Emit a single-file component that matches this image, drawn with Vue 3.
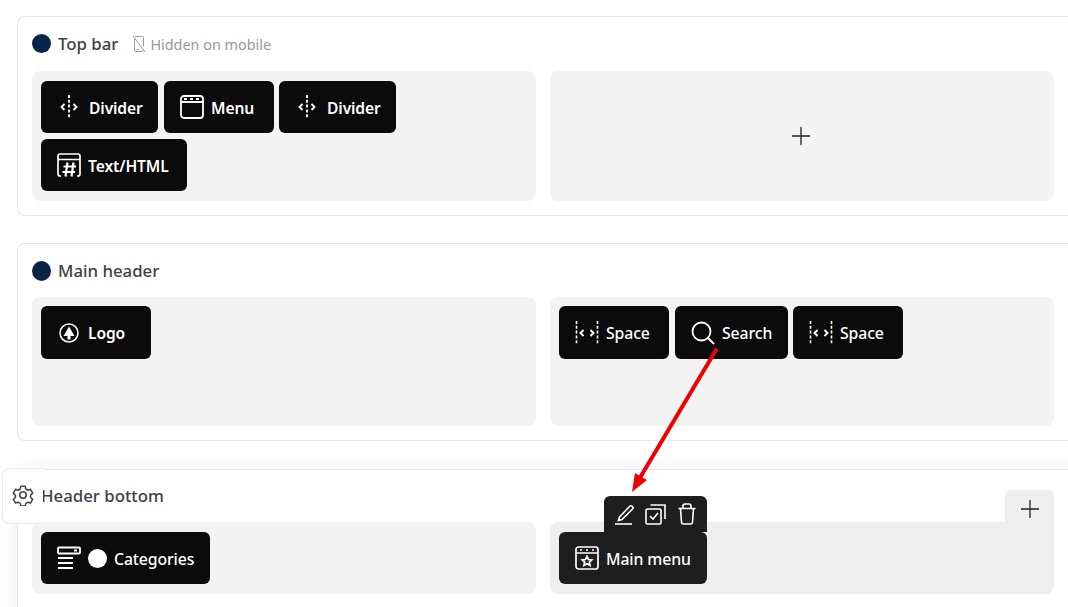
<script setup>
</script>

<template>
  <div class="page">
    <section class="card card-top">
      <header class="head">
        <span class="dot"></span>
        <span class="title">Top bar</span>
        <span class="hidden-note">
          <svg width="14" height="18" viewBox="0 0 14 18" fill="none" stroke="#999" stroke-width="1"><path d="M2.500 4v11.500a1 1 0 0 0 1 1h7a1 1 0 0 0 1-1V14M3 1.500h7.500a1 1 0 0 1 1 1V11M1 1l12 16M5 14.500h2"/></svg>
          Hidden on mobile
        </span>
      </header>
      <div class="zones">
        <div class="zone">
          <div class="widget strong w-divider">
            <svg width="20" height="24" viewBox="0 0 20 24" fill="none" stroke="#fff" stroke-width="1.800"><path d="M10 0v24" stroke-dasharray="3 1.800"/><path d="M5.500 9L2.500 12l3 3M14.500 9l3 3-3 3"/></svg>
            <span>Divider</span>
          </div>
          <div class="widget strong w-menu">
            <svg width="24" height="24" viewBox="0 0 24 24" fill="none" stroke="#fff" stroke-width="1.800"><rect x="1" y="1" width="22" height="22" rx="3"/><path d="M1 7h22M4 4h3M10 4h3M16 4h3"/></svg>
            <span>Menu</span>
          </div>
          <div class="widget strong w-divider tight">
            <svg width="20" height="24" viewBox="0 0 20 24" fill="none" stroke="#fff" stroke-width="1.800"><path d="M10 0v24" stroke-dasharray="3 1.800"/><path d="M5.500 9L2.500 12l3 3M14.500 9l3 3-3 3"/></svg>
            <span>Divider</span>
          </div>
          <div class="widget strong w-text">
            <svg width="24" height="24" viewBox="0 0 24 24" fill="none" stroke="#fff" stroke-width="1.700"><path d="M4 23H3a2 2 0 0 1-2-2V3a2 2 0 0 1 2-2h18a2 2 0 0 1 2 2v18a2 2 0 0 1-2 2h-1M1 6.500h22"/><path d="M10.500 9.500l-2 14M16.500 9.500l-2 14M6.500 13.500h12.500M5.500 19h12.500" stroke-width="2.200"/></svg>
            <span>Text/HTML</span>
          </div>
        </div>
        <div class="zone zone-center">
          <svg width="20" height="20" viewBox="0 0 20 20" stroke="#222" stroke-width="1.300"><path d="M10 1v18M1 10h18"/></svg>
        </div>
        <div class="zone"></div>
      </div>
    </section>

    <section class="card card-main">
      <header class="head">
        <span class="dot dot-main"></span>
        <span class="title title-main">Main header</span>
      </header>
      <div class="zones">
        <div class="zone">
          <div class="widget strong w-logo">
            <svg width="20" height="20" viewBox="0 0 20 20"><circle cx="10" cy="10" r="9" fill="none" stroke="#fff" stroke-width="1.500"/><path d="M10 3.500l5.500 9.500h-4v3.500h-3V13h-4z" fill="#fff"/></svg>
            <span>Logo</span>
          </div>
        </div>
        <div class="zone">
          <div class="widget w-space">
            <svg width="24" height="24" viewBox="0 0 24 24" fill="none" stroke="#fff" stroke-width="1.600"><path d="M1.500 0v24M22.500 0v24" stroke-dasharray="3 1.800"/><path d="M8.500 9L5.500 12l3 3M15.500 9l3 3-3 3" stroke-width="1.900"/></svg>
            <span>Space</span>
          </div>
          <div class="widget w-search">
            <svg width="24" height="24" viewBox="0 0 24 24" fill="none" stroke="#fff" stroke-width="1.800"><circle cx="10.500" cy="10.500" r="9"/><path d="M17 17l6 6"/></svg>
            <span>Search</span>
          </div>
          <div class="widget w-space tight">
            <svg width="24" height="24" viewBox="0 0 24 24" fill="none" stroke="#fff" stroke-width="1.600"><path d="M1.500 0v24M22.500 0v24" stroke-dasharray="3 1.800"/><path d="M8.500 9L5.500 12l3 3M15.500 9l3 3-3 3" stroke-width="1.900"/></svg>
            <span>Space</span>
          </div>
        </div>
        <div class="zone"></div>
      </div>
    </section>

    <section class="card card-bottom">
      <div class="gear-tab">
        <svg width="22" height="22" viewBox="0 0 24 24" fill="none" stroke="#444" stroke-width="1.700" stroke-linejoin="round"><path d="M9.600 2.500h4.800l.6 3 2.300 1.300 2.900-1 2.400 4.200-2.300 2v2.600l2.300 2-2.400 4.200-2.900-1-2.300 1.300-.6 3H9.600l-.6-3-2.300-1.300-2.900 1-2.400-4.200 2.300-2v-2.600l-2.300-2 2.400-4.200 2.900 1L9 5.500z"/><circle cx="12" cy="12" r="3.500"/></svg>
      </div>
      <header class="head">
        <span class="title title-bottom">Header bottom</span>
      </header>
      <div class="zones">
        <div class="zone">
          <div class="widget w-cat">
            <svg width="24" height="24" viewBox="0 0 24 24" fill="none" stroke="#fff" stroke-width="1.800"><rect x="1" y="1.500" width="22" height="6" rx="1"/><path d="M17 4.500h3M1 12h15M1 17h15M1 22h15"/></svg>
            <span class="white-dot"></span>
            <span>Categories</span>
          </div>
        </div>
        <div class="zone zone-active">
          <div class="add-tab">
            <svg width="18" height="18" viewBox="0 0 18 18" stroke="#222" stroke-width="1.300"><path d="M9 0v18M0 9h18"/></svg>
          </div>
          <div class="widget w-mainmenu">
            <div class="toolbar">
              <svg width="22" height="22" viewBox="0 0 22 22" fill="none" stroke="#fff" stroke-width="1.600"><path d="M5.500 14L15.500 3.500a1.800 1.800 0 0 1 3 2.500L8 16.500l-3.500 1z"/><path d="M1 21h17"/></svg>
              <svg width="22" height="22" viewBox="0 0 22 22" fill="none" stroke="#fff" stroke-width="1.600"><rect x="1" y="6" width="15" height="15" rx="1.500"/><path d="M5.500 2H20v14M5 13l3 3 5-6"/></svg>
              <svg width="22" height="22" viewBox="-1 0 22 22" fill="none" stroke="#fff" stroke-width="1.600"><path d="M1.500 5.500h17M6 5V3a2 2 0 0 1 2-2h4a2 2 0 0 1 2 2v2M3.500 6l1 13a2 2 0 0 0 2 2h7a2 2 0 0 0 2-2l1-13"/></svg>
            </div>
            <svg width="24" height="24" viewBox="0 0 24 24" fill="none" stroke="#fff" stroke-width="1.700"><rect x="1" y="1" width="22" height="22" rx="2.500"/><path d="M1 7h22M5 4h2M11 4h2M17 4h2"/><path d="M12 10.500l1.500 3 3.300.4-2.400 2.200.6 3.200-3-1.600-3 1.600.6-3.200-2.400-2.200 3.300-.4z" stroke-width="1.700"/></svg>
            <span>Main menu</span>
          </div>
        </div>
        <div class="zone"></div>
      </div>
    </section>

    <svg class="arrow" width="1068" height="607" viewBox="0 0 1068 607">
      <path d="M716 350L641 476" stroke="#f00000" stroke-width="4" stroke-linecap="round" fill="none"/>
      <path d="M632 492L635 473L647 480z" fill="#f00000"/>
    </svg>
  </div>
</template>

<style>
html, body { margin: 0; background: #fff; overflow: hidden; }
</style>

<style scoped>
.page {
  position: relative;
  width: 1068px;
  height: 607px;
  overflow: hidden;
  background: #fff;
  font-family: "Noto Sans", sans-serif;
  box-sizing: border-box;
  padding: 16px 0 0 17px;
}
.card {
  box-sizing: border-box;
  width: 1100px;
  border: 1px solid #e6e6e6;
  border-right: 0;
  border-radius: 8px 0 0 8px;
  padding: 0 0 14px 14px;
  background: #fff;
}
.card-top { height: 200px; }
.card-main { height: 198px; margin-top: 27px; }
.card-bottom {
  position: relative;
  height: 160px;
  margin-top: 28px;
  box-shadow: 0 0 20px rgba(0, 0, 0, 0.07);
}
.head {
  display: flex;
  align-items: center;
  height: 54px;
}
.card-main .head { height: 53px; }
.card-bottom .head { height: 52px; }
.dot {
  width: 19px;
  height: 19px;
  border-radius: 50%;
  background: #0a2348;
  margin-right: 7px;
  margin-top: -2px;
}
.dot-main { height: 20px; margin-top: 0; }
.title {
  font-size: 16.800px;
  font-weight: 500;
  color: #3f4047;
  line-height: 1;
}
.title-main { margin-top: 2px; }
.title-bottom { margin-left: 9px; margin-top: 1px; }
.hidden-note {
  display: flex;
  align-items: center;
  gap: 4px;
  margin-left: 14px;
  font-size: 14.400px;
  color: #999;
}
.zones {
  display: flex;
  gap: 14px;
}
.zone {
  position: relative;
  box-sizing: border-box;
  flex: 0 0 504px;
  display: flex;
  flex-wrap: wrap;
  align-content: flex-start;
  gap: 6px;
  padding: 10px 9px;
  background: #f3f3f3;
  border-radius: 8px;
}
.card-top .zone { height: 130px; }
.card-main .zone { height: 129px; padding-top: 9px; }
.card-bottom .zone { height: 72px; }
.zone-center {
  align-items: center;
  align-content: center;
  justify-content: center;
  padding-right: 11px;
}
.zone-active {
  background: #eeeeee;
  border-top-right-radius: 0;
}
.widget {
  position: relative;
  box-sizing: border-box;
  display: flex;
  align-items: center;
  height: 52px;
  padding-left: 16px;
  background: #0b0b0b;
  border-radius: 6px;
  color: #fff;
  font-size: 15.800px;
  font-weight: 500;
  letter-spacing: -0.1px;
  white-space: nowrap;
}
.widget > span { padding-top: 1px; }
.strong { font-weight: 600; font-size: 15.600px; }
.card-main .widget { height: 53px; }
.card-main .widget > span { padding-top: 0; }
.w-divider { width: 117px; gap: 10px; padding-left: 18px; }
.w-menu { width: 110px; gap: 7px; }
.w-text { width: 146px; gap: 7px; }
.w-logo { width: 110px; gap: 9px; padding-left: 18px; }
.w-space { width: 110px; gap: 7px; }
.w-search { width: 113px; gap: 7px; }
.w-cat { width: 169px; gap: 7px; }
.w-mainmenu { width: 148px; gap: 7px; background: #1e1e1e; }
.tight { margin-left: -1px; }
.widget > .white-dot {
  width: 19px;
  height: 19px;
  padding-top: 0;
  border-radius: 50%;
  background: #fff;
}
.toolbar {
  position: absolute;
  right: 0;
  bottom: 52px;
  box-sizing: border-box;
  width: 103px;
  height: 36px;
  display: flex;
  align-items: center;
  justify-content: center;
  gap: 9px;
  padding-left: 1px;
  background: #1e1e1e;
  border-radius: 6px 6px 0 0;
}
.add-tab {
  position: absolute;
  right: 0;
  bottom: 100%;
  box-sizing: border-box;
  width: 49px;
  height: 32px;
  padding-top: 6px;
  display: flex;
  align-items: center;
  justify-content: center;
  background: #eeeeee;
  border-radius: 6px 6px 0 0;
}
.gear-tab {
  position: absolute;
  left: -16px;
  top: -2px;
  box-sizing: border-box;
  width: 41px;
  height: 56px;
  display: flex;
  align-items: center;
  padding: 0 0 3px 9px;
  background: #fff;
  border: 1px solid #e9e9e9;
  border-right: 0;
  border-radius: 8px 0 0 8px;
}
.arrow {
  position: absolute;
  left: 0;
  top: 0;
  pointer-events: none;
}
</style>
